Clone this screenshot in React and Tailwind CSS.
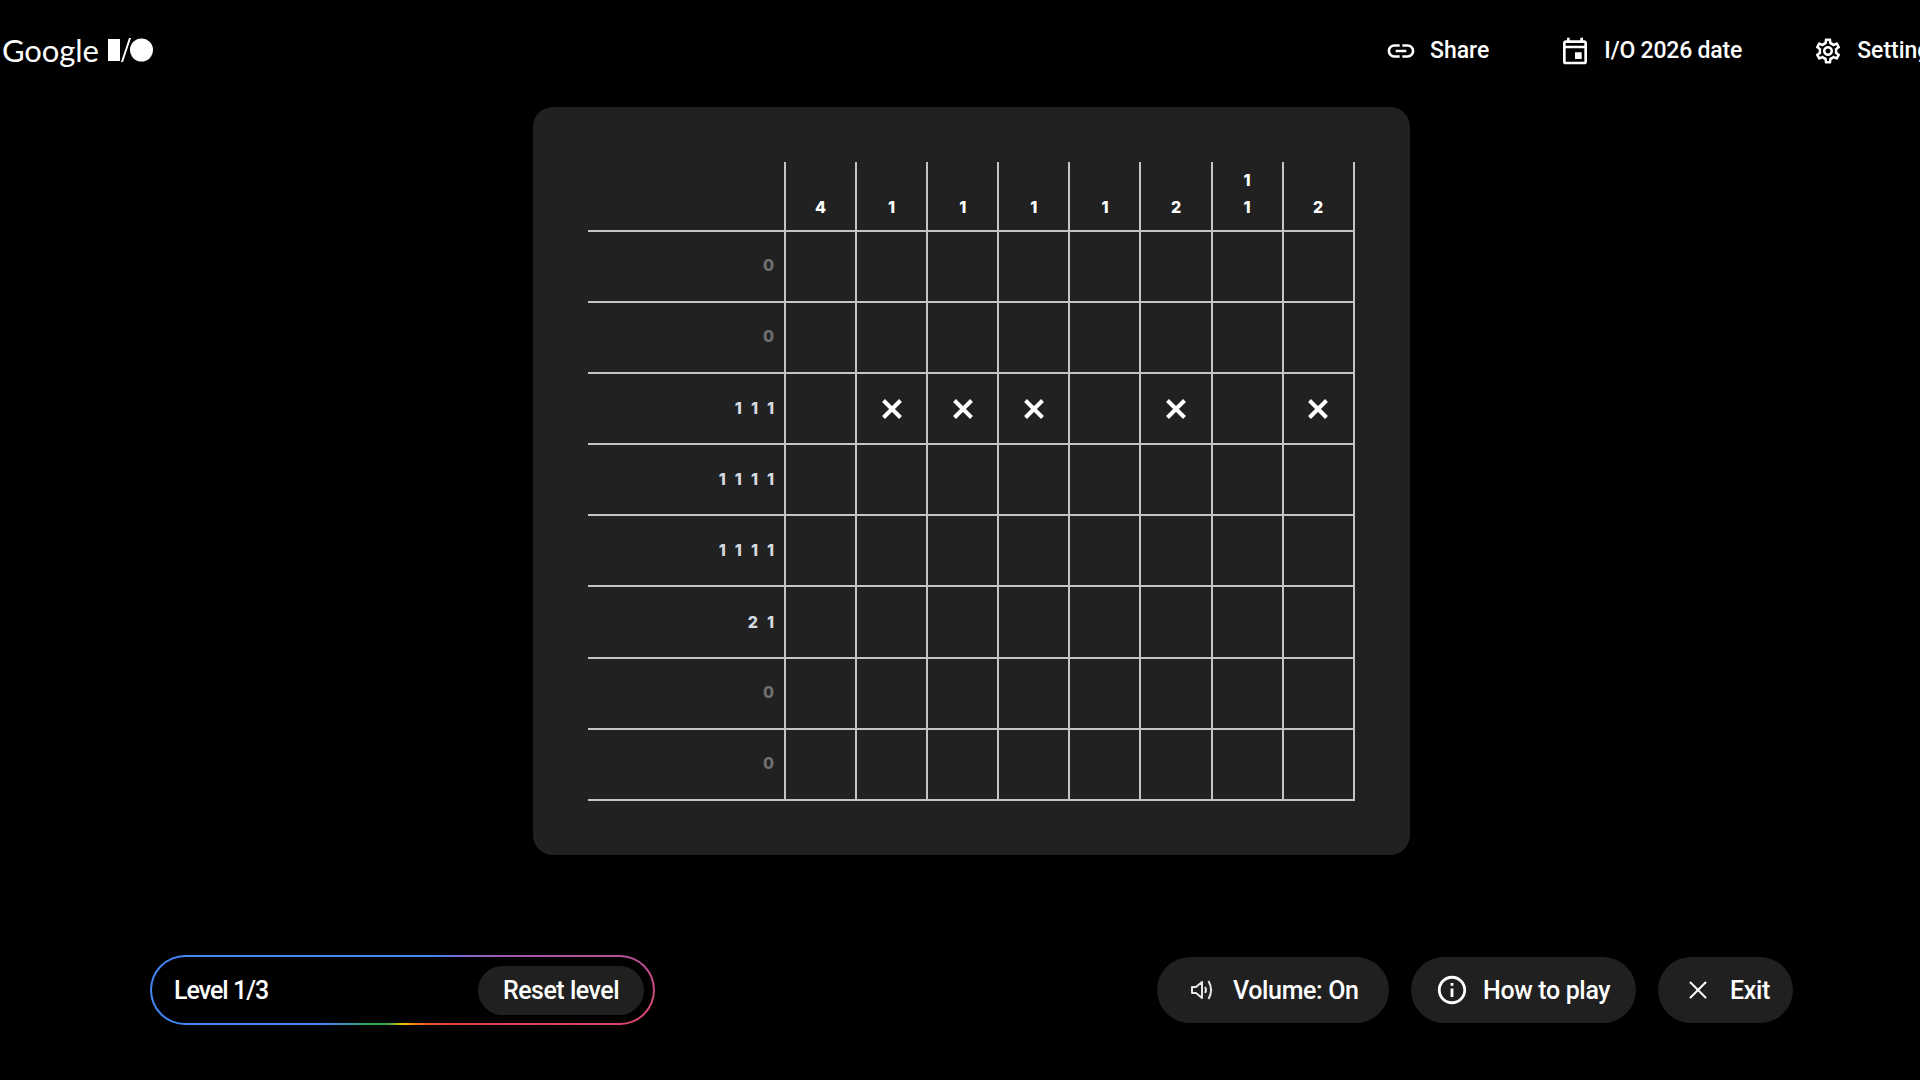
import React from "react";
import { MdLink, MdOutlineEvent, MdOutlineSettings, MdInfoOutline } from "react-icons/md";
import { X } from "lucide-react";

const colClues = [["4"], ["1"], ["1"], ["1"], ["1"], ["2"], ["1", "1"], ["2"]];
const rows = [
  { clue: ["0"], marks: [] },
  { clue: ["0"], marks: [] },
  { clue: ["1", "1", "1"], marks: [1, 2, 3, 5, 7] },
  { clue: ["1", "1", "1", "1"], marks: [] },
  { clue: ["1", "1", "1", "1"], marks: [] },
  { clue: ["2", "1"], marks: [] },
  { clue: ["0"], marks: [] },
  { clue: ["0"], marks: [] },
];

const Mark = () => (
  <svg width="24" height="24" viewBox="0 0 24 24">
    <path d="M3.5 3.5L20.5 20.5M20.5 3.5L3.5 20.5" stroke="white" strokeWidth="4" />
  </svg>
);

const VolumeIcon = () => (
  <svg width="24" height="24" viewBox="0 0 24 24" fill="none" stroke="#e6e6e6" strokeWidth="2">
    <path d="M2 9h4l6-5v16l-6-5H2z" strokeLinejoin="round" />
    <path d="M15 9c1.2 1.8 1.2 4.2 0 6" />
    <path d="M18.5 3c3.2 5.5 3.2 12.5 0 18" />
  </svg>
);

const Logo = () => (
  <div className="flex items-center h-[36px] mt-[-1px]">
    <span className="text-[31px] tracking-[-0.1px] text-white font-['Lato',sans-serif] leading-none">Google</span>
    <svg className="ml-[9px] mt-[-1px]" width="46" height="24" viewBox="0 0 46 24" fill="white">
      <rect x="0" y="1" width="12" height="22" />
      <path d="M21 0h2L15 24h-2z" />
      <circle cx="33.5" cy="12" r="11.5" />
    </svg>
  </div>
);

const Pill = ({ icon, label, className }) => (
  <button className={`h-[66px] shrink-0 whitespace-nowrap rounded-full bg-[#202020] flex items-center text-white text-[25px] font-medium tracking-[-0.35px] ${className}`}>
    {icon}
    <span className="pt-[1px]">{label}</span>
  </button>
);

export default function App() {
  return (
    <div className="h-screen w-full overflow-hidden bg-black flex flex-col font-['Roboto',sans-serif]">
      <header className="h-[107px] flex items-start pt-[33px] pl-[2px] shrink-0">
        <div className="w-[1383px] shrink-0">
          <Logo />
        </div>
        <nav className="flex items-center shrink-0 text-white text-[23px] h-[36px]">
          <MdLink size={32} />
          <span className="ml-[13px] font-medium pt-[1px]">Share</span>
          <MdOutlineEvent size={32} className="ml-[70px]" />
          <span className="ml-[13px] font-medium tracking-[-0.2px] pt-[1px]">I/O 2026 date</span>
          <MdOutlineSettings size={30} className="ml-[71px]" />
          <span className="ml-[14px] font-medium pt-[1px]">Settings</span>
        </nav>
      </header>

      <main className="flex justify-center pl-[23px] shrink-0">
        <div className="w-[877px] h-[748px] rounded-[20px] bg-[#212121] p-[55px]">
          <div className="grid grid-cols-[198px_repeat(8,71.1px)] grid-rows-[70px_repeat(8,71.1px)] text-white text-[16px] font-extrabold font-['Inter',sans-serif]">
            <div className="border-b-2 border-r-2 border-[#c4c4c4]" />
            {colClues.map((clue, i) => (
              <div key={i} className="border-b-2 border-r-2 border-[#c4c4c4] flex flex-col items-center justify-end pb-[9px] leading-[27px]">
                {clue.map((n, j) => (
                  <span key={j}>{n}</span>
                ))}
              </div>
            ))}
            {rows.map((row, r) => (
              <React.Fragment key={r}>
                <div className={`border-b-2 border-r-2 border-[#c4c4c4] flex items-center justify-end ${row.clue[0] === "0" ? "pb-[3px] pr-[10px]" : "pb-[1px] pr-[10px] gap-[9px]"}`}>
                  {row.clue.map((n, j) => (
                    <span key={j} className={n === "0" ? "text-[#6f6f6f]" : "text-[#d5d9e0]"}>{n}</span>
                  ))}
                </div>
                {colClues.map((_, c) => (
                  <div key={c} className="border-b-2 border-r-2 border-[#c4c4c4] flex items-center justify-center">
                    {row.marks.includes(c) && <Mark />}
                  </div>
                ))}
              </React.Fragment>
            ))}
          </div>
        </div>
      </main>

      <footer className="flex items-center justify-between pl-[150px] pr-[127px] mt-[100px] shrink-0">
        <div className="w-[505px] h-[70px] rounded-full p-[2px] bg-[conic-gradient(#4285f4_0deg,#4285f4_45deg,#9b5bb5_70deg,#c94a80_90deg,#e0435c_105deg,#ea4335_125deg,#f2701c_155deg,#fbbc04_178deg,#34a853_205deg,#34a853_225deg,#4285f4_248deg,#4285f4_360deg)]">
          <div className="h-full rounded-full bg-black flex items-center justify-between pl-[22px] pr-[9px] text-white text-[25px] font-medium tracking-[-0.5px]">
            <span className="tracking-[-1px] pt-[1px]">Level 1/3</span>
            <button className="h-[49px] w-[166px] rounded-full bg-[#202020] pt-[1px]">Reset level</button>
          </div>
        </div>
        <div className="flex items-center gap-[22px] shrink-0">
          <Pill className="w-[232px] pl-[33px] gap-[19px]" icon={<VolumeIcon />} label="Volume: On" />
          <Pill className="w-[225px] pl-[24px] gap-[14px]" icon={<MdInfoOutline size={34} />} label="How to play" />
          <Pill className="w-[135px] pl-[25px] gap-[17px]" icon={<X size={30} strokeWidth={1.6} />} label="Exit" />
        </div>
      </footer>
    </div>
  );
}
